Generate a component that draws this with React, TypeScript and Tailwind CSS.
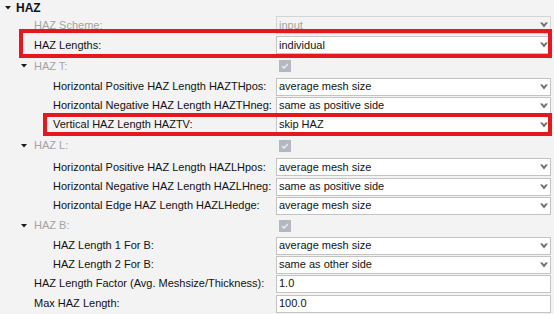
import React from 'react';

type Row = {
  label: string;
  indent: 0 | 1;
  kind: 'select' | 'text' | 'check';
  value?: string;
  disabled?: boolean;
  group?: boolean;
  h: string;
};

const rows: Row[] = [
  { label: 'HAZ Scheme:', indent: 0, kind: 'select', value: 'input', disabled: true, h: 'h-[20px]' },
  { label: 'HAZ Lengths:', indent: 0, kind: 'select', value: 'individual', h: 'h-[20px]' },
  { label: 'HAZ T:', indent: 0, kind: 'check', group: true, h: 'h-[22px]' },
  { label: 'Horizontal Positive HAZ Length HAZTHpos:', indent: 1, kind: 'select', value: 'average mesh size', h: 'h-[19px]' },
  { label: 'Horizontal Negative HAZ Length HAZTHneg:', indent: 1, kind: 'select', value: 'same as positive side', h: 'h-[19px]' },
  { label: 'Vertical HAZ Length HAZTV:', indent: 1, kind: 'select', value: 'skip HAZ', h: 'h-[19px]' },
  { label: 'HAZ L:', indent: 0, kind: 'check', group: true, h: 'h-[23px]' },
  { label: 'Horizontal Positive HAZ Length HAZLHpos:', indent: 1, kind: 'select', value: 'average mesh size', h: 'h-[20px]' },
  { label: 'Horizontal Negative HAZ Length HAZLHneg:', indent: 1, kind: 'select', value: 'same as positive side', h: 'h-[19px]' },
  { label: 'Horizontal Edge HAZ Length HAZLHedge:', indent: 1, kind: 'select', value: 'average mesh size', h: 'h-[19px]' },
  { label: 'HAZ B:', indent: 0, kind: 'check', group: true, h: 'h-[21px]' },
  { label: 'HAZ Length 1 For B:', indent: 1, kind: 'select', value: 'average mesh size', h: 'h-[19px]' },
  { label: 'HAZ Length 2 For B:', indent: 1, kind: 'select', value: 'same as other side', h: 'h-[19px]' },
  { label: 'HAZ Length Factor (Avg. Meshsize/Thickness):', indent: 0, kind: 'text', value: '1.0', h: 'h-[19px]' },
  { label: 'Max HAZ Length:', indent: 0, kind: 'text', value: '100.0', h: 'h-[21px]' },
];

const Caret = ({ className }: { className: string }) => (
  <svg width="6" height="4" viewBox="0 0 6 4" className={className}>
    <polygon points="0,0 6,0 3,3.5" fill="#1a1a1a" />
  </svg>
);

const Chevron = () => (
  <svg width="8" height="6" viewBox="0 0 8 6" className="ml-auto mr-[2px] shrink-0">
    <polygon points="0,0.5 2.5,0.5 4,2.5 5.5,0.5 8,0.5 4,5.5" fill="#6e6e6e" />
  </svg>
);

export default function App() {
  return (
    <div className="relative w-[554px] h-[314px] overflow-hidden bg-[#f3f3f3] text-[11px] text-[#111] font-['Liberation_Sans',Arial,sans-serif]">
      {/* section header */}
      <div className="flex items-center h-[15px]">
        <Caret className="ml-[5px] mr-[5px]" />
        <span className="font-bold text-[12px]">HAZ</span>
      </div>

      {rows.map((r, i) => (
        <div key={i} className={`flex items-center ${r.h}`}>
          <div className={`flex items-center w-[276px] shrink-0 ${r.indent ? 'pl-[53px]' : r.group ? 'pl-[21px]' : 'pl-[34px]'}`}>
            {r.group && <Caret className="mr-[7px]" />}
            <span className={`whitespace-nowrap ${r.group || r.disabled ? 'text-[#a3a3a3]' : ''}`}>{r.label}</span>
          </div>
          <div className="flex-1 mr-[3px]">
            {r.kind === 'check' ? (
              <div className="ml-[3px] w-[12px] h-[12px] bg-[#b3b7bf] flex items-center justify-center">
                <svg width="8" height="6" viewBox="0 0 8 6">
                  <polyline points="1,3 3,5 7,1" fill="none" stroke="#eef0f3" strokeWidth="1.3" />
                </svg>
              </div>
            ) : (
              <div
                className={`h-[18px] border flex items-center pl-[2px] leading-none ${
                  r.disabled ? 'bg-[#f3f3f3] border-[#d4d4d4] text-[#a3a3a3]' : 'bg-white border-[#c3c3c3]'
                }`}
              >
                {r.value}
                {r.kind === 'select' && <Chevron />}
              </div>
            )}
          </div>
        </div>
      ))}

      {/* annotation frames */}
      <div className="absolute left-[19px] top-[29px] w-[533px] h-[29px] border-[4px] border-[#e3191f]" />
      <div className="absolute left-[43px] top-[113px] w-[509px] h-[23px] border-[4px] border-[#e3191f]" />
    </div>
  );
}
